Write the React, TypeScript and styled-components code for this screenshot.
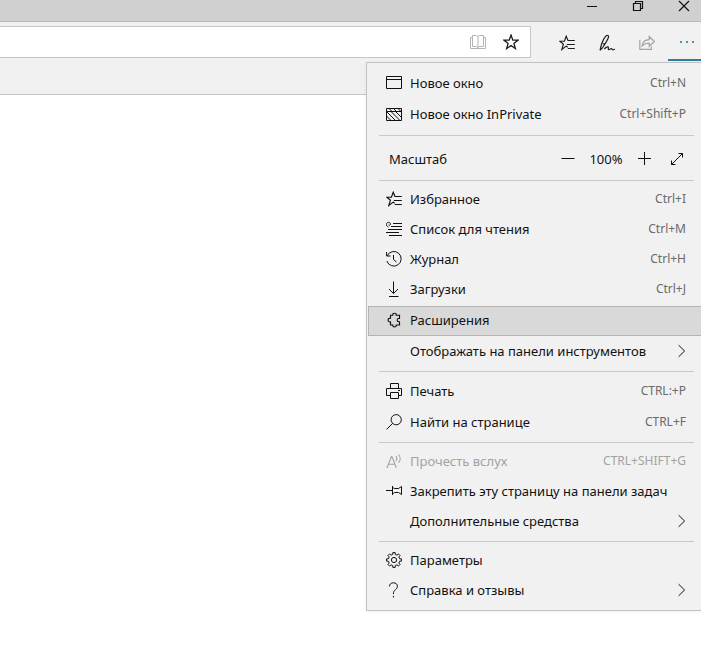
import React from "react";
import styled, { createGlobalStyle } from "styled-components";

const GlobalStyle = createGlobalStyle`
  *, *::before, *::after { box-sizing: border-box; }
  body {
    margin: 0;
    background: #ffffff;
    color: #111111;
    font-family: "Noto Sans", "Open Sans", sans-serif;
    font-size: 13px;
    line-height: 18px;
    overflow-x: hidden;
  }
  button, input {
    font: inherit;
    color: inherit;
    background: none;
    border: 0;
    padding: 0;
    margin: 0;
  }
`;

const Browser = styled.div`
  position: relative;
  min-height: 100vh;
`;

const TitleBar = styled.div`
  display: flex;
  justify-content: flex-end;
  gap: 12px;
  height: 22px;
  padding-bottom: 9px;
  background: #d0d0d0;
  border-bottom: 1px solid #b9b9b9;
`;

const WindowButton = styled.button`
  display: flex;
  align-items: center;
  justify-content: center;
  width: 34px;
`;

const Toolbar = styled.div`
  display: flex;
  height: 41px;
  background: #f1f1f1;
`;

const AddressBar = styled.div`
  display: flex;
  flex: 1;
  height: 32px;
  margin-top: 4px;
  padding-right: 3px;
  background: #ffffff;
  border: 1px solid #c6c6c6;
  border-left: 0;
`;

const AddressInput = styled.input`
  flex: 1;
  min-width: 0;
  padding: 0 12px;
  outline: 0;
`;

const AddressButton = styled.button<{ $muted?: boolean }>`
  display: flex;
  align-items: center;
  justify-content: center;
  width: 33px;
  color: ${(p) => (p.$muted ? "#b4b4b4" : "#1c1c1c")};
`;

const Tools = styled.div`
  display: flex;
  padding-left: 16px;
`;

const ToolButton = styled.button<{ $muted?: boolean }>`
  display: flex;
  align-items: center;
  justify-content: center;
  width: 40px;
  color: ${(p) => (p.$muted ? "#a5a5a5" : "#1c1c1c")};
`;

const MoreButton = styled.button`
  display: flex;
  align-items: center;
  justify-content: center;
  width: 33px;
  height: 39px;
  margin-left: 1px;
  padding: 2px 0 0 4px;
  color: #2f7d9f;
  border-bottom: 2px solid #2f7d9f;
`;

const FavoritesBar = styled.div`
  height: 32px;
  background: #f0f0f0;
  border-bottom: 1px solid #c6c6c6;
`;

const Menu = styled.div`
  position: absolute;
  top: 62px;
  right: 0;
  width: 335px;
  padding: 4px 0 5px 1px;
  background: #f1f1f1;
  border: 1px solid #c2c2c2;
  border-right: 0;
  box-shadow: 0 1px 4px rgba(0, 0, 0, 0.06);
`;

const Group = styled.div<{ $top?: number; $bottom?: number }>`
  padding-top: ${(p) => p.$top ?? 3}px;
  padding-bottom: ${(p) => p.$bottom ?? 5}px;
`;

const Separator = styled.hr`
  height: 1px;
  margin: 0 7px 0 11px;
  border: 0;
  background: #c8c8c8;
`;

const MenuItem = styled.button<{ $tall?: boolean; $active?: boolean }>`
  display: flex;
  align-items: center;
  gap: 8px;
  width: 100%;
  height: ${(p) => (p.$tall ? 31 : 30)}px;
  margin-top: ${(p) => (p.$active ? 2 : 0)}px;
  padding: ${(p) => (p.$active ? "0 15px 2px 17px" : "0 15px 0 18px")};
  text-align: left;
  background: ${(p) => (p.$active ? "#d9d9d9" : "transparent")};
  border: ${(p) => (p.$active ? "1px solid #b4b4b4" : "0")};
  border-right: 0;
  &:disabled { color: #a2a2a2; }
`;

const IconSlot = styled.span`
  display: flex;
  flex: none;
  width: 16px;
  height: 16px;
`;

const Label = styled.span`
  flex: 1;
  white-space: nowrap;
`;

const Shortcut = styled.span<{ $muted?: boolean }>`
  font-size: 12px;
  white-space: nowrap;
  color: ${(p) => (p.$muted ? "#a2a2a2" : "#6a6a6a")};
`;

const ZoomRow = styled.div`
  display: flex;
  align-items: center;
  height: 30px;
  padding: 0 11px 0 21px;
`;

const ZoomButton = styled.button`
  display: flex;
  align-items: center;
  justify-content: center;
  width: 26px;
  height: 26px;
`;

const ZoomValue = styled.output`
  width: 50px;
  text-align: center;
`;

const FullScreenButton = styled(ZoomButton)`
  margin-left: 7px;
`;

type IconProps = { w?: number; h?: number; sw?: number; children: React.ReactNode };

const Icon = ({ w = 16, h = 16, sw = 1, children }: IconProps) => (
  <svg
    width={w}
    height={h}
    viewBox={`0 0 ${w} ${h}`}
    fill="none"
    stroke="currentColor"
    strokeWidth={sw}
    aria-hidden="true"
  >
    {children}
  </svg>
);

const HubIcon = () => (
  <Icon sw={1.15}>
    <path d="M9 5.5 7.2 1.2 5.4 6.2H.9l3.5 3-1.6 5.2 4.4-3.3 1.6 1.1M8.6 5.5h7.2M7.8 9.5h8M8.8 13.5h7" />
  </Icon>
);

const NewWindowIcon = () => (
  <Icon>
    <path d="M.5 1.5h15v12H.5zM.5 4.5h15" />
  </Icon>
);

const PrivateIcon = () => (
  <Icon>
    <path d="M.5 2.5h15v12H.5zM.5 5.5h15M.5 10l4.5 4.5M.5 5.5l9 9M5 5.5l9 9M9.5 5.5l6 6M3 2.5l3 3M7.5 2.5l3 3M12 2.5l3 3" />
  </Icon>
);

const ReadingListIcon = () => (
  <Icon>
    <path d="M7 2.5h9M5 5.5h11M2 8.5h14M0 11.5h13M3 14.5h13M2.4 5.9C.9 5.4.3 4.5.4 3.3.5 2 1.5 1.3 2.6 1.4c1.1 0 1.9.7 1.9 1.7s-1.1 1.5-1.9.9" />
  </Icon>
);

const HistoryIcon = () => (
  <Icon>
    <path d="M1.2 4.8A7.3 7.3 0 1 1 .9 10M.6 1v4h4M7.5 4v4.5l3 2.5" />
  </Icon>
);

const DownloadIcon = () => (
  <Icon>
    <path d="M7.5.5v12M3 8l4.5 4.5L12 8M3 15.5h9.5" />
  </Icon>
);

const ExtensionIcon = () => (
  <Icon sw={1.15}>
    <path d="M4.5 3.2h2.3c-.2-1.3.5-2 1.7-2s1.9.7 1.7 2h3.3v3.3h-.9c-1.9 0-1.9 3.2 0 3.2h.9V13h-3.3c.2 1.3-.5 2-1.7 2s-1.9-.7-1.7-2H4.5V9.9c-1.5.3-2.4-.4-2.4-1.8s.9-2.1 2.4-1.8z" />
  </Icon>
);

const PrintIcon = () => (
  <Icon>
    <path d="M4.5 5.5v-5h8v5M4.5 12.5h-4v-7h15v7h-3M4.5 9.5h8v6h-8zM12 7.5h2" />
  </Icon>
);

const SearchIcon = () => (
  <Icon>
    <circle cx="10.2" cy="5.7" r="5.1" />
    <path d="M6.6 9.4.6 15.4" />
  </Icon>
);

const ReadAloudIcon = () => (
  <Icon sw={1.1}>
    <path d="M.9 15 5.5 3.5h.4L10.4 15M2.3 11.2H9M9.8 3.2c1.2 1.3 1.2 3.5 0 4.9M12.5 1.5c2.2 2.4 2.2 5.9 0 8.3" />
  </Icon>
);

const PinIcon = () => (
  <Icon>
    <path d="M0 7.5h6.5M6.5 3v9M6.5 4.5l2 1h4l3-2v8l-3-2h-4l-2 1.5" />
  </Icon>
);

const teeth = Array.from({ length: 8 }, (_, i) => {
  const point = (radius: number, deg: number) => {
    const a = ((deg - 90) * Math.PI) / 180;
    return `${(8 + radius * Math.cos(a)).toFixed(2)} ${(8 + radius * Math.sin(a)).toFixed(2)}`;
  };
  const c = i * 45;
  return [point(5.7, c - 13), point(7.5, c - 9), point(7.5, c + 9), point(5.7, c + 13)].join("L");
});

const GearIcon = () => (
  <Icon>
    <path d={`M${teeth.join("L")}Z`} />
    <circle cx="8" cy="8" r="2.6" />
  </Icon>
);

const HelpIcon = () => (
  <Icon>
    <path d="M3.5 4.4C3.5 2.1 5 .8 7.4.8s4 1.3 4 3.4c0 1.7-.9 2.6-2.1 3.7C8 9 7.4 9.7 7.4 12M7.4 13.8v1.7" />
  </Icon>
);

const ChevronIcon = () => (
  <Icon w={8} h={14}>
    <path d="M.6 1.2 6.6 7 .6 12.8" />
  </Icon>
);

type ItemProps = {
  icon?: React.ReactNode;
  label: string;
  keys?: string;
  submenu?: boolean;
  tall?: boolean;
  active?: boolean;
  disabled?: boolean;
};

const Item = ({ icon, label, keys, submenu, tall, active, disabled }: ItemProps) => (
  <MenuItem
    type="button"
    role="menuitem"
    $tall={tall}
    $active={active}
    disabled={disabled}
    aria-haspopup={submenu ? "menu" : undefined}
  >
    <IconSlot>{icon}</IconSlot>
    <Label>{label}</Label>
    {keys && <Shortcut $muted={disabled}>{keys}</Shortcut>}
    {submenu && <ChevronIcon />}
  </MenuItem>
);

export default function App() {
  return (
    <>
      <GlobalStyle />
      <Browser>
        <TitleBar>
          <WindowButton type="button" aria-label="Свернуть">
            <Icon w={12} h={12}><path d="M1 6.5h10" /></Icon>
          </WindowButton>
          <WindowButton type="button" aria-label="Восстановить">
            <Icon w={12} h={12} sw={1.2}><path d="M1.5 3.5h7v7h-7zM3.5 3.5v-2h7v7h-2" /></Icon>
          </WindowButton>
          <WindowButton type="button" aria-label="Закрыть">
            <Icon w={12} h={12} sw={1.15}><path d="m1 1 10 10M11 1 1 11" /></Icon>
          </WindowButton>
        </TitleBar>

        <Toolbar>
          <AddressBar>
            <AddressInput type="text" aria-label="Адрес" />
            <AddressButton type="button" $muted aria-label="Режим чтения">
              <Icon><path d="M2.5 1.5h4l1.5 1 1.5-1h4v11h-4l-1.5 1-1.5-1h-4zM8 2.5v11M2.5 3.5h-2v11h15v-11h-2" /></Icon>
            </AddressButton>
            <AddressButton type="button" aria-label="Добавить в избранное">
              <Icon sw={1.3}><path d="m8 1 1.8 5.1h5.3l-4.2 3.3 1.5 5.2L8 11.5l-4.4 3.1 1.5-5.2L.9 6.1h5.3z" /></Icon>
            </AddressButton>
          </AddressBar>
          <Tools>
            <ToolButton type="button" aria-label="Центр"><HubIcon /></ToolButton>
            <ToolButton type="button" aria-label="Добавить заметки">
              <Icon w={18} h={18} sw={1.2}>
                <path d="M2 16.3 3.3 11C4.7 6.8 6.4 3.3 8.3 1.7c1.3-1 2.6-.2 2.2 1.4C9.8 6 6.8 10.3 4.6 13.6L2 16.3M4.9 9.5l2.1 1M6.3 15c1.5-1.6 2.8-2.5 3.7-2.1 1.2.6-.5 2.5.8 2.7 1 .2 1.5-1.1 2.5-1 .9.1.7 1.4 1.7 1.4.8 0 1.3-.5 1.9-1" />
              </Icon>
            </ToolButton>
            <ToolButton type="button" $muted aria-label="Поделиться">
              <Icon sw={1.2}><path d="M.8 4.8v9.6h11.6v-3M3.2 10.8c.5-3.7 3-6 7-6.1V1.5l5.1 5-5.1 4.8V8.2c-3.3 0-5.2.8-7 2.6z" /></Icon>
            </ToolButton>
            <MoreButton type="button" aria-label="Параметры и другое" aria-expanded="true">
              <Icon w={16} h={4}>
                <g fill="currentColor" stroke="none">
                  <circle cx="2" cy="2" r="1.1" />
                  <circle cx="8" cy="2" r="1.1" />
                  <circle cx="14" cy="2" r="1.1" />
                </g>
              </Icon>
            </MoreButton>
          </Tools>
        </Toolbar>

        <FavoritesBar />

        <Menu role="menu">
          <Group $top={0} $bottom={6}>
            <Item tall icon={<NewWindowIcon />} label="Новое окно" keys="Ctrl+N" />
            <Item tall icon={<PrivateIcon />} label="Новое окно InPrivate" keys="Ctrl+Shift+P" />
          </Group>
          <Separator />
          <Group $top={8} $bottom={6}>
            <ZoomRow>
              <Label>Масштаб</Label>
              <ZoomButton type="button" aria-label="Уменьшить">
                <Icon><path d="M1.5 7.5h13" /></Icon>
              </ZoomButton>
              <ZoomValue>100%</ZoomValue>
              <ZoomButton type="button" aria-label="Увеличить">
                <Icon><path d="M2 7.5h13M8.5 1v13" /></Icon>
              </ZoomButton>
              <FullScreenButton type="button" aria-label="Во весь экран">
                <Icon w={14} h={14}><path d="M1.5 12.5l11-11M8.5 1.5h4v4M1.5 8.5v4h4" /></Icon>
              </FullScreenButton>
            </ZoomRow>
          </Group>
          <Separator />
          <Group>
            <Item icon={<HubIcon />} label="Избранное" keys="Ctrl+I" />
            <Item icon={<ReadingListIcon />} label="Список для чтения" keys="Ctrl+M" />
            <Item icon={<HistoryIcon />} label="Журнал" keys="Ctrl+H" />
            <Item icon={<DownloadIcon />} label="Загрузки" keys="Ctrl+J" />
            <Item active icon={<ExtensionIcon />} label="Расширения" />
            <Item label="Отображать на панели инструментов" submenu />
          </Group>
          <Separator />
          <Group>
            <Item tall icon={<PrintIcon />} label="Печать" keys="CTRL:+P" />
            <Item tall icon={<SearchIcon />} label="Найти на странице" keys="CTRL+F" />
          </Group>
          <Separator />
          <Group>
            <Item disabled icon={<ReadAloudIcon />} label="Прочесть вслух" keys="CTRL+SHIFT+G" />
            <Item icon={<PinIcon />} label="Закрепить эту страницу на панели задач" />
            <Item label="Дополнительные средства" submenu />
          </Group>
          <Separator />
          <Group $bottom={0}>
            <Item icon={<GearIcon />} label="Параметры" />
            <Item icon={<HelpIcon />} label="Справка и отзывы" submenu />
          </Group>
        </Menu>
      </Browser>
    </>
  );
}
